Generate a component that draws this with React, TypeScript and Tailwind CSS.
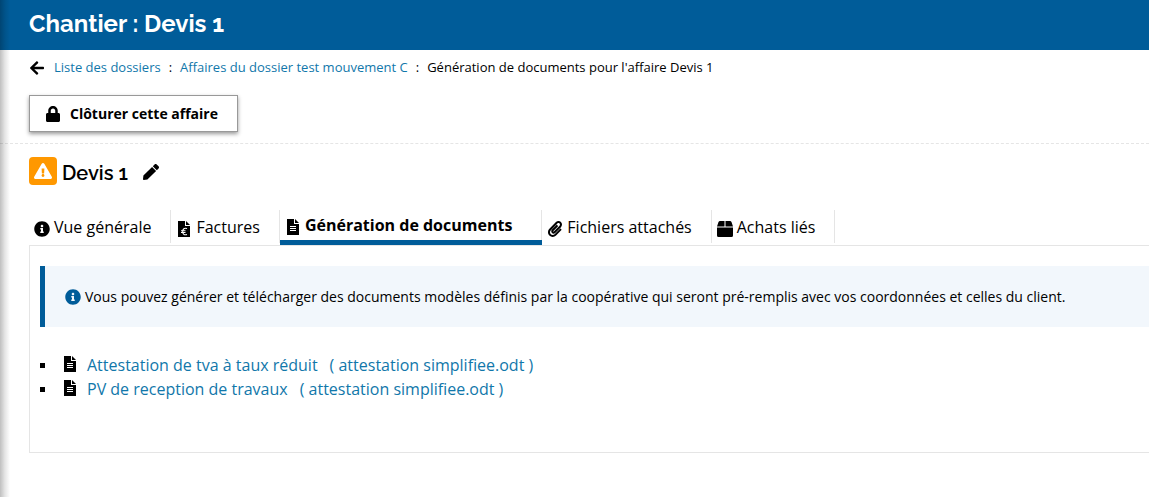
import type { ReactNode } from "react";
import { FaArrowLeft, FaLock, FaPen, FaInfoCircle, FaPaperclip, FaExclamationTriangle } from "react-icons/fa";

function FileIcon({ euro = false }: { euro?: boolean }) {
  return (
    <svg viewBox="0 0 12 16" className="h-4 w-3 shrink-0" fill="currentColor" aria-hidden="true">
      <path d="M0 0h7v5h5v11H0zM8 0l4 4H8z" />
      {euro ? (
        <path d="M9 7.6C6.300 6.600 4.700 8 4.700 10.500s1.600 4 4.300 3M3 9.700h4.500M3 11.500h4.500" fill="none" stroke="#fff" strokeWidth="1.100" />
      ) : (
        <path d="M3 7.500h6M3 9.500h6M3 11.500h6" stroke="#fff" strokeWidth="1" />
      )}
    </svg>
  );
}

function BoxIcon() {
  return (
    <svg viewBox="0 0 16 16" className="size-4 shrink-0" fill="currentColor" aria-hidden="true">
      <path d="M3 0h4.500v5.500H0L1.500 1Q2 0 3 0zM8.500 0H13q1 0 1.500 1L16 5.500H8.500zM0 6.500h16V14.500q0 1.500-1.500 1.500h-13Q0 16 0 14.500z" />
    </svg>
  );
}

function Tab({ icon, label, current = false }: { icon: ReactNode; label: string; current?: boolean }) {
  return (
    <li
      className={
        current
          ? "flex h-[35px] flex-col border-b-[5px] border-[#005c99] font-bold"
          : "mb-0.5 flex h-[33px] flex-col"
      }
    >
      <a
        href="#"
        aria-current={current ? "page" : undefined}
        className={
          current
            ? "flex h-[30px] items-center gap-1 border-r border-[#e5e5e5] pr-[29px] pl-[5px]"
            : "flex h-[33px] items-center gap-1 border-r border-[#e5e5e5] pr-[19px] pl-[5px]"
        }
      >
        <span className="mt-1 flex w-4 justify-center">{icon}</span>
        {label}
      </a>
    </li>
  );
}

const documents = ["Attestation de tva à taux réduit", "PV de reception de travaux"];

export default function App() {
  return (
    <div className="relative min-h-screen overflow-hidden bg-white font-['Open_Sans',sans-serif] text-black">
      <div className="pointer-events-none absolute inset-y-0 left-0 w-2.5 bg-linear-to-r from-black/25 via-black/10 to-transparent" />
      <header className="flex h-[50px] items-center bg-[#005c99] pl-[29px] text-white">
        <h1 className="pb-0.5 font-['Raleway','Open_Sans',sans-serif] text-2xl font-bold">Chantier : Devis 1</h1>
      </header>

      <nav className="flex h-[35px] items-center pl-[29px] text-[13px]" aria-label="Fil d'Ariane">
        <a href="#" aria-label="Retour" className="mr-[9px] flex w-4 justify-center">
          <FaArrowLeft className="size-4" />
        </a>
        <a href="#" className="text-[#1177aa]">Liste des dossiers</a>
        <span className="mx-2">:</span>
        <a href="#" className="text-[#1177aa]">Affaires du dossier test mouvement C</a>
        <span className="mx-2">:</span>
        <span>Génération de documents pour l'affaire Devis 1</span>
      </nav>

      <div className="border-b border-dashed border-[#e5e5e5] pt-2.5 pb-[11px] pl-[29px]">
        <button type="button" className="flex h-[37px] items-center gap-[9px] border border-[#999] bg-white pr-[19px] pl-[15px] text-sm font-bold shadow-[0_2px_4px_rgba(0,0,0,0.4)]">
          <FaLock className="size-4" />
          Clôturer cette affaire
        </button>
      </div>

      <main className="pl-[29px]">
        <div className="flex items-center pt-[13px]">
          <span className="flex size-7 items-center justify-center rounded bg-[#ff9800] text-white">
            <FaExclamationTriangle className="size-[18px]" />
          </span>
          <h2 className="ml-[5px] pt-1 font-['Raleway','Open_Sans',sans-serif] text-xl leading-6 font-semibold">Devis 1</h2>
          <button type="button" aria-label="Modifier" className="ml-[15px] pt-0.5">
            <FaPen className="size-4" />
          </button>
        </div>

        <ul className="flex h-[60px] items-end text-base">
          <Tab icon={<FaInfoCircle className="size-4" />} label="Vue générale" />
          <Tab icon={<FileIcon euro />} label="Factures" />
          <Tab icon={<FileIcon />} label="Génération de documents" current />
          <Tab icon={<FaPaperclip className="size-4" />} label="Fichiers attachés" />
          <Tab icon={<BoxIcon />} label="Achats liés" />
        </ul>

        <section className="border border-r-0 border-[#e5e5e5] pt-5 pb-[51px] pl-2.5">
          <p className="flex items-center gap-1 border-l-[5px] border-[#005c99] bg-[#f2f7fc] px-5 py-5 text-sm leading-[21px]">
            <FaInfoCircle className="size-4 shrink-0 text-[#005c99]" />
            Vous pouvez générer et télécharger des documents modèles définis par la coopérative qui seront pré-remplis avec vos coordonnées et celles du client.
          </p>
          <ul className="pt-[26px] text-base leading-6">
            {documents.map((name) => (
              <li key={name} className="flex items-center">
                <span className="mr-[19px] size-[5px] bg-black" />
                <span className="mb-0.5">
                  <FileIcon />
                </span>
                <a href="#" className="ml-[11px] flex gap-3 text-[#1177aa]">
                  <span>{name}</span>
                  <span>( attestation simplifiee.odt )</span>
                </a>
              </li>
            ))}
          </ul>
        </section>
      </main>
    </div>
  );
}
